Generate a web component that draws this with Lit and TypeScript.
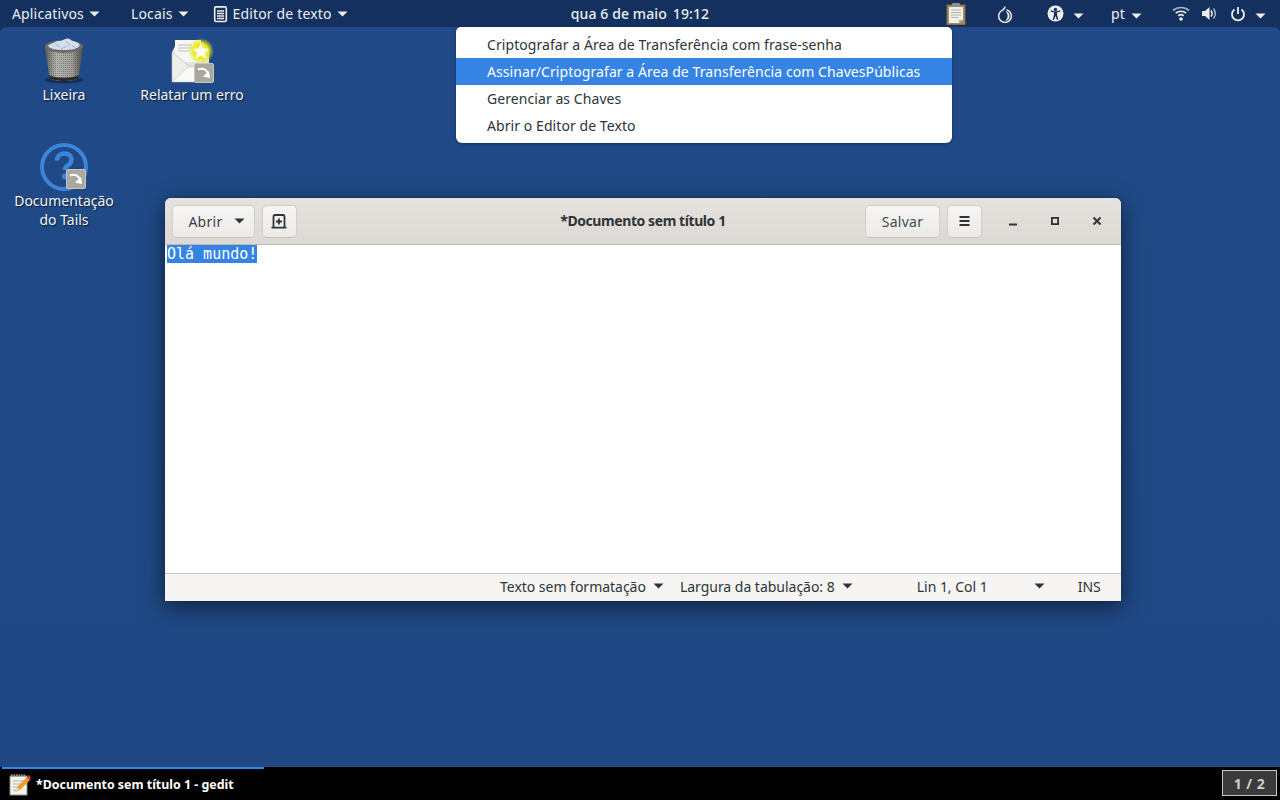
import { LitElement, html, css, svg } from "lit";
import { customElement } from "lit/decorators.js";

const caret = (c = "currentColor") => html`<svg class="caret" width="11" height="6" viewBox="0 0 11 6"><path d="M0.500 0.500h10l-5 5z" fill=${c}/></svg>`;
const shortcut = svg`<g><rect x="0.500" y="0.500" width="19" height="19" rx="1.500" fill="#a9a9a1" stroke="#c6c6bf" stroke-width="1"/><path d="M4 6.500c4-1.500 8-.5 10 4" fill="none" stroke="#fff" stroke-width="2"/><path d="M9 13.500l7 1.500-1-7z" fill="#fff"/></g>`;

@customElement("app-root")
export class AppRoot extends LitElement {
  static styles = css`
    :host { display: block; width: 1280px; height: 800px; overflow: hidden; font-family: "Noto Sans", sans-serif; font-size: 14px; background: #12305e; }
    .screen { display: flex; flex-direction: column; width: 1280px; height: 800px; }
    .topbar { height: 27px; flex: none; background: #13305f; color: #eeeeec; display: grid; grid-template-columns: 1fr auto 1fr; align-items: center; font-size: 14px; letter-spacing: 0.15px; }
    .left, .tray { display: flex; align-items: center; height: 27px; }
    .tray { justify-content: flex-end; padding-right: 14px; }
    .pm { display: flex; align-items: center; gap: 5px; white-space: nowrap; }
    .apps { margin-left: 12px; }
    .places { margin-left: 31px; }
    .editor { margin-left: 24px; }
    .clock { white-space: nowrap; font-weight: 500; letter-spacing: 0.1px; }
    .clock span { margin-left: 6px; }
    .pt { width: 15px; }
    .m5 { margin-left: 5px; }
    .m9 { margin-left: 9px; }
    .m11 { margin-left: 11px; }
    .m13 { margin-left: 13px; }
    .m27 { margin-left: 27px; }
    .m29 { margin-left: 29px; }
    .m30 { margin-left: 30px; }
    .m33 { margin-left: 33px; }
    .desktop { flex: 1; position: relative; border-radius: 6px 6px 0 0; overflow: hidden; background: linear-gradient(#204a87, #1f4884); }
    .ico { position: absolute; width: 110px; display: flex; flex-direction: column; align-items: center; color: #f4f4f4; text-shadow: 1px 1px 1px #0b1c38; text-align: center; line-height: 19px; font-size: 14px; }
    .ico svg { display: block; }
    .trash { left: 9px; top: 10px; }
    .bug { left: 137px; top: 10px; }
    .doc { left: 9px; top: 116px; }
    .bug svg { margin-bottom: 2px; }
    .doc svg { margin-left: 2px; }
    .menu { position: absolute; left: 456px; top: 0; width: 496px; height: 116px; background: #fff; border-radius: 5px 5px 6px 6px; box-shadow: 0 1px 3px rgba(0,0,0,.35); padding: 4px 0; box-sizing: border-box; color: #2e3436; font-size: 14px; letter-spacing: 0.07px; }
    .item { height: 27px; line-height: 27px; padding-left: 31px; white-space: nowrap; }
    .item.sel { background: #3584e4; color: #fff; }
    .win { position: absolute; left: 165px; top: 171px; width: 956px; height: 403px; display: flex; flex-direction: column; border-radius: 6px 6px 0 0; box-shadow: 0 6px 22px rgba(0,0,0,.55), 0 0 0 1px rgba(0,0,0,.12); background: #fff; }
    .hb { height: 47px; flex: none; box-sizing: border-box; background: linear-gradient(#e6e3df, #dcd8d3); border-bottom: 1px solid #bfb8b1; border-radius: 6px 6px 0 0; display: flex; align-items: center; padding: 0 3px 0 7px; color: #2e3436; position: relative; }
    .btn { height: 33px; box-sizing: border-box; border: 1px solid #d2cdc8; border-bottom-color: #c4bfb9; border-radius: 5px; background: linear-gradient(#f6f5f4, #edebe9); display: flex; align-items: center; justify-content: center; font-size: 14px; color: #2e3436; letter-spacing: 0.3px; }
    .open { width: 83px; gap: 11px; padding-left: 6px; color: #3a3f41; }
    .new { width: 35px; margin-left: 7px; padding-right: 2px; }
    .title { position: absolute; left: 0; right: 0; top: 13px; line-height: 20px; text-align: center; font-weight: 700; font-size: 14px; letter-spacing: -0.42px; pointer-events: none; }
    .sp { flex: 1; }
    .save { width: 75px; color: #44494b; }
    .burger { width: 35px; margin-left: 7px; padding-right: 1px; }
    .wc { width: 42px; display: flex; justify-content: center; align-items: center; height: 33px; }
    .wcs { display: flex; margin-left: 10px; }
    .body { flex: 1; background: #fff; padding: 0 2px; }
    .sel-text { display: block; width: 90px; background: #3584e4; color: #fff; font-family: "DejaVu Sans Mono", monospace; font-size: 15px; line-height: 18px; height: 18px; white-space: pre; overflow: hidden; }
    .status { height: 28px; flex: none; box-sizing: border-box; border-top: 1px solid #cdc7c2; background: #f6f5f4; color: #2e3436; font-size: 14px; display: flex; align-items: center; white-space: nowrap; letter-spacing: -0.02px; padding-bottom: 3px; }
    .st { display: flex; align-items: center; gap: 7px; }
    .st1 { margin-left: 335px; }
    .st2 { margin-left: 16px; }
    .st3 { margin-left: 64px; width: 128px; justify-content: space-between; }
    .st4 { margin-left: 33px; }
    .taskbar { height: 33px; flex: none; background: #000; position: relative; display: flex; align-items: center; color: #fff; }
    .task { position: absolute; left: 2px; top: 0; width: 262px; height: 33px; border-top: 2px solid #3584e4; box-sizing: border-box; display: flex; align-items: center; gap: 5px; padding-left: 5px; font-weight: 700; font-size: 12.4px; white-space: nowrap; }
    .pager { position: absolute; left: 1222px; top: 3px; width: 55px; height: 26px; box-sizing: border-box; border: 1px solid #c8c8c8; background: #3a3a3a; color: #d0d0d0; font-weight: 700; font-size: 14px; display: flex; align-items: center; justify-content: center; letter-spacing: 0.5px; }
  `;

  render() {
    return html`<div class="screen">
      <div class="topbar">
        <div class="left">
          <div class="pm apps">Aplicativos ${caret()}</div>
          <div class="pm places">Locais ${caret()}</div>
          <div class="pm editor">
            <svg width="15" height="18" viewBox="0 0 15 18"><rect x="1.700" y="1.700" width="11.600" height="14.800" rx="1.500" fill="none" stroke="#eeeeec" stroke-width="1.600"/><path d="M3 1v2M5 1v2M7 1v2M9 1v2M11 1v2" stroke="#eeeeec" stroke-width="1"/><path d="M4 6h7M4 8.500h7M4 11h7M4 13.500h7" stroke="#eeeeec" stroke-width="1.300"/></svg>
            Editor de texto ${caret()}
          </div>
        </div>
        <div class="clock">qua 6 de maio<span>19:12</span></div>
        <div class="tray">
          <svg width="22" height="23" viewBox="0 0 22 23">
            <rect x="2" y="3" width="18" height="19.500" fill="#a58a5c" stroke="#8a6f45"/>
            <path d="M4 5h14v13l-4 3H4z" fill="#efefea"/><path d="M18 18l-4 3v-3z" fill="#a8a8a0"/>
            <path d="M6 8h10M6 10.500h10M6 13h10M6 15.500h7" stroke="#b4b4ae" stroke-width="1"/>
            <rect x="7" y="1" width="8" height="4" rx="1" fill="#8c8f8d"/>
          </svg>
          <svg class="m29" width="18" height="18" viewBox="0 0 18 18"><path d="M9 1.500c0 2-1 2.400-2.400 3.600C4 6.600 2.600 8.600 2.600 11a6.400 6.400 0 0 0 12.800 0c0-2.400-1.600-4.800-4.600-6.400" fill="none" stroke="#eeeeec" stroke-width="1.500"/><path d="M9.200 5.500c2.800 1.200 4.400 3 4.400 5.500 0 2.800-2 4.800-4.600 4.800 2-1.400 2.600-3 2.600-5 0-2-1-3.500-2.400-5.300z" fill="#eeeeec"/></svg>
          <svg class="m33" width="17" height="17" viewBox="0 0 17 17"><circle cx="8.500" cy="8.500" r="8" fill="#eeeeec"/><circle cx="8.500" cy="4.400" r="1.700" fill="#13305f"/><path d="M3.500 6.500l3.500 1v2.500l-1.400 4.500 1.400.4 1.500-4 1.500 4 1.400-.4L10 10V7.500l3.500-1-.3-1.200-3.400.9H7.200l-3.400-.9z" fill="#13305f"/></svg>
          <span class="m9">${caret()}</span>
          <span class="m27 pt">pt</span>
          <span class="m5">${caret()}</span>
          <svg class="m30" width="18" height="17" viewBox="0 0 18 17"><path d="M1 5.500c4.500-4 11.500-4 16 0" fill="none" stroke="#a9b1bd" stroke-width="1.700"/><path d="M3.700 8.200c3-2.600 7.600-2.600 10.600 0" fill="none" stroke="#eeeeec" stroke-width="1.700"/><path d="M6.300 10.900c1.500-1.300 3.900-1.300 5.400 0" fill="none" stroke="#eeeeec" stroke-width="1.700"/><circle cx="9" cy="14" r="1.800" fill="#eeeeec"/></svg>
          <svg class="m11" width="16" height="17" viewBox="0 0 16 17"><path d="M1 6h3l4.500-4v13L4 11H1z" fill="#eeeeec"/><path d="M10 5.500c1.300 1.800 1.300 4.200 0 6" fill="none" stroke="#eeeeec" stroke-width="1.500"/><path d="M12.500 3.500c2.200 3 2.200 7 0 10" fill="none" stroke="#a9b1bd" stroke-width="1.500"/></svg>
          <svg class="m13" width="16" height="16" viewBox="0 0 16 16"><path d="M8 1v7" stroke="#eeeeec" stroke-width="1.800" fill="none"/><path d="M4.500 3.500a6 6 0 1 0 7 0" fill="none" stroke="#eeeeec" stroke-width="1.800"/></svg>
          <span class="m9">${caret()}</span>
        </div>
      </div>
      <div class="desktop">
        <div class="ico trash">
          <svg width="46" height="48" viewBox="0 0 46 48">
            <defs>
              <linearGradient id="tr" x1="0" x2="1"><stop offset="0" stop-color="#5f5f5a"/><stop offset=".3" stop-color="#b5b5b0"/><stop offset=".7" stop-color="#a2a29d"/><stop offset="1" stop-color="#4c4c48"/></linearGradient>
              <pattern id="mesh" width="2" height="2" patternUnits="userSpaceOnUse"><rect width="1" height="1" fill="#3c3c3a" opacity=".45"/></pattern>
            </defs>
            <ellipse cx="23" cy="43" rx="19" ry="3.500" fill="#0c1c38" opacity=".6"/>
            <path d="M4 9l4.500 32c4 4 25 4 29 0L42 9z" fill="url(#tr)"/>
            <path d="M4 9l4.500 32c4 4 25 4 29 0L42 9z" fill="url(#mesh)"/>
            <path d="M8.500 41c4 4 25 4 29 0l.5-3c-5 3.500-25 3.500-30 0z" fill="#2b2b29"/>
            <ellipse cx="23" cy="9.500" rx="19" ry="6.500" fill="#6a6a68"/>
            <path d="M7 9c2-3 5-2 7-4 3-2 5 0 8-2 3-2 6-2 8 0 3 2 6 1 9 5-2 4-8 5-16 5S9 12 7 9z" fill="#d5deee"/>
            <path d="M14 7l5 3M25 4l4 5M20 12l6-3M31 8l3 3" stroke="#9eb0cc" stroke-width="1"/>
          </svg>
          Lixeira
        </div>
        <div class="ico bug">
          <svg width="50" height="46" viewBox="0 0 50 46">
            <defs><radialGradient id="gl"><stop offset=".55" stop-color="#ecec20"/><stop offset="1" stop-color="#e6e600" stop-opacity="0"/></radialGradient></defs>
            <path d="M5 15L10 5h26l6 10v29H5z" fill="#e4e4de"/>
            <path d="M8 17V3h26v22H8z" fill="#f6f6f3"/>
            <path d="M11 8h14M11 11h14M11 14h12" stroke="#bdbdb8"/>
            <path d="M5 15l18 15L5 45z" fill="#eeeeea" stroke="#b9b9b4" stroke-width=".6"/>
            <path d="M5 45l16-15h6l16 15z" fill="#fafaf8" stroke="#c4c4bf" stroke-width=".6"/>
            <circle cx="34" cy="14" r="13" fill="url(#gl)"/>
            <path d="M34 6l2.500 5.300 5.700.7-4.200 3.800 1.200 5.600-5.200-2.900-5.200 2.900 1.200-5.600-4.200-3.800 5.700-.7z" fill="#fbfbf2"/>
            <g transform="translate(27,26)">${shortcut}</g>
          </svg>
          Relatar um erro
        </div>
        <div class="ico doc">
          <svg width="50" height="48" viewBox="0 0 50 48">
            <circle cx="24" cy="24" r="22" fill="none" stroke="#3d85d8" stroke-width="4"/>
            <path d="M17 17.500c0-4.500 3.500-7 7.500-7s7 2.500 7 6.200c0 3-1.800 4.500-4 5.900-2 1.300-2.500 2-2.500 4.400" fill="none" stroke="#3d85d8" stroke-width="4.600"/>
            <circle cx="25" cy="33.500" r="3" fill="#3d85d8"/>
            <g transform="translate(26,26)">${shortcut}</g>
          </svg>
          <div>Documentação<br />do Tails</div>
        </div>

        <div class="win">
          <div class="hb">
            <div class="btn open">Abrir ${caret("#2e3436")}</div>
            <div class="btn new">
              <svg width="16" height="15" viewBox="0 0 16 15"><path d="M2.500 13.500V2.500a1.500 1.500 0 0 1 1.500-1.500h8a1.500 1.500 0 0 1 1.500 1.500v11" fill="none" stroke="#2e3436" stroke-width="1.800"/><path d="M0.500 13.700h15" stroke="#2e3436" stroke-width="1.800"/><path d="M8 4.500v6M5 7.500h6" stroke="#2e3436" stroke-width="1.800"/></svg>
            </div>
            <div class="title">*Documento sem título 1</div>
            <div class="sp"></div>
            <div class="btn save">Salvar</div>
            <div class="btn burger"><svg width="11" height="10" viewBox="0 0 11 10"><path d="M0.500 1h10M0.500 5h10M0.500 9h10" stroke="#2e3436" stroke-width="2"/></svg></div>
            <div class="wcs">
              <div class="wc"><svg width="10" height="10" viewBox="0 0 10 10"><path d="M1 8.500h8" stroke="#2e3436" stroke-width="1.800"/></svg></div>
              <div class="wc"><svg width="10" height="10" viewBox="0 0 10 10"><rect x="1.900" y="1.900" width="6.200" height="6.200" fill="none" stroke="#2e3436" stroke-width="1.800"/></svg></div>
              <div class="wc"><svg width="10" height="10" viewBox="0 0 10 10"><path d="M1.500 1.500l7 7M8.500 1.500l-7 7" stroke="#2e3436" stroke-width="2"/></svg></div>
            </div>
          </div>
          <div class="body"><span class="sel-text">Olá mundo!</span></div>
          <div class="status">
            <div class="st st1">Texto sem formatação ${caret("#2e3436")}</div>
            <div class="st st2">Largura da tabulação: 8 ${caret("#2e3436")}</div>
            <div class="st st3">Lin 1, Col 1 ${caret("#2e3436")}</div>
            <div class="st st4">INS</div>
          </div>
        </div>

        <div class="menu">
          <div class="item">Criptografar a Área de Transferência com frase-senha</div>
          <div class="item sel">Assinar/Criptografar a Área de Transferência com ChavesPúblicas</div>
          <div class="item">Gerenciar as Chaves</div>
          <div class="item">Abrir o Editor de Texto</div>
        </div>
      </div>
      <div class="taskbar">
        <div class="task">
          <svg width="24" height="24" viewBox="0 0 24 24">
            <rect x="3" y="3" width="17" height="19" fill="#f4f4ef" stroke="#8d8d88"/>
            <path d="M4 2.500h15" stroke="#8d8d88" stroke-width="2.500" stroke-dasharray="1.500 1"/>
            <path d="M6 8h11M6 11h11M6 14h8M6 17h6" stroke="#b0b0aa"/>
            <path d="M8 19l2-5L20 4l3 3-10 10z" fill="#f09a2f"/><path d="M20 4l3 3 1-2-2-3z" fill="#d6403a"/><path d="M8 19l2-5 3 3z" fill="#f3d5a8"/>
          </svg>
          *Documento sem título 1 - gedit
        </div>
        <div class="pager">1 / 2</div>
      </div>
    </div>`;
  }
}
